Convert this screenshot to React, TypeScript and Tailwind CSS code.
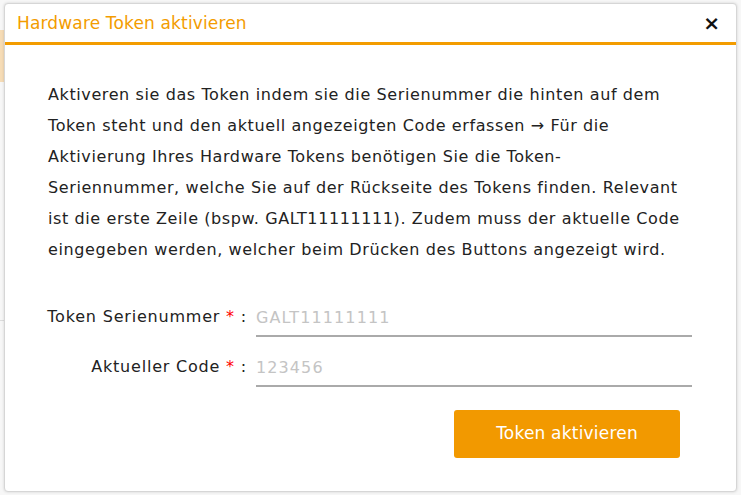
import React from "react";

export default function App() {
  const font = { fontFamily: '"DejaVu Sans", "Liberation Sans", sans-serif' };
  return (
    <div className="w-[741px] h-[495px] bg-[#f7f7f7] overflow-hidden relative" style={font}>
      <div className="absolute left-0 top-[30px] w-[4px] h-[52px] bg-[#f6dcb6]" />
      <div className="absolute left-0 top-[320px] w-[4px] h-px bg-[#dddddd]" />
      <div className="ml-[4px] mt-[3px] w-[733px] h-[489px] bg-white rounded-[4px] border border-[#d6d6d6] shadow-[0_0_3px_rgba(0,0,0,0.15)] flex flex-col relative">
        <div className="h-[38px] flex items-center justify-between pl-[12px] pr-[16px] border-b-[3px] border-[#f39c00] box-content">
          <span className="text-[#f39c00] text-[17px] tracking-[0.15px] pt-[2px]">Hardware Token aktivieren</span>
          <span className="text-[#111] text-[20px] font-bold leading-none">×</span>
        </div>
        <div className="pl-[43px] pr-[20px] pt-[34px]">
          <p className="text-[#222] text-[16px] tracking-[0.6px] leading-[31px]">
            Aktiveren sie das Token indem sie die Serienummer die hinten auf dem<br />
            Token steht und den aktuell angezeigten Code erfassen → Für die<br />
            Aktivierung Ihres Hardware Tokens benötigen Sie die Token-<br />
            Seriennummer, welche Sie auf der Rückseite des Tokens finden. Relevant<br />
            ist die erste Zeile (bspw. GALT11111111). Zudem muss der aktuelle Code<br />
            eingegeben werden, welcher beim Drücken des Buttons angezeigt wird.
          </p>
        </div>
        <div className="flex flex-col gap-[14px] mt-[36px]">
          <div className="flex items-end">
            <label className="w-[251px] text-right text-[#222] text-[16px] tracking-[0.8px] pb-[8px] pr-[9px] whitespace-nowrap">
              Token Serienummer <span className="text-[#f00]">*</span> :
            </label>
            <div className="w-[436px] border-b-2 border-[#aaaaaa] h-[36px] flex items-center text-[16px] tracking-[1.1px] text-[#c4c4c4]">GALT11111111</div>
          </div>
          <div className="flex items-end">
            <label className="w-[251px] text-right text-[#222] text-[16px] tracking-[0.8px] pb-[8px] pr-[9px] whitespace-nowrap">
              Aktueller Code <span className="text-[#f00]">*</span> :
            </label>
            <div className="w-[436px] border-b-2 border-[#aaaaaa] h-[36px] flex items-center text-[16px] tracking-[1.1px] text-[#c4c4c4]">123456</div>
          </div>
        </div>
        <div className="flex justify-end pr-[56px] mt-[23px]">
          <button className="w-[226px] h-[48px] bg-[#f29900] rounded-[3px] text-white text-[17px] tracking-[0.2px]">Token aktivieren</button>
        </div>
      </div>
    </div>
  );
}
